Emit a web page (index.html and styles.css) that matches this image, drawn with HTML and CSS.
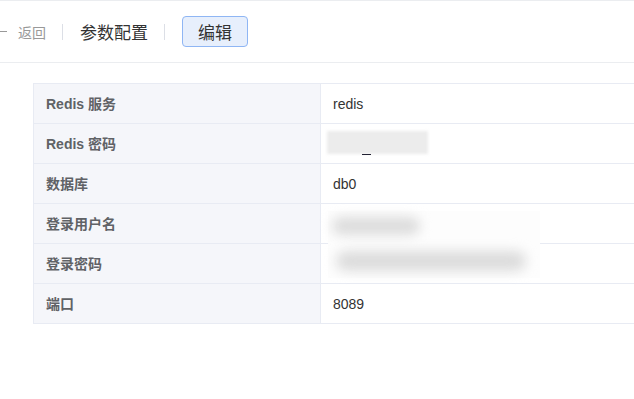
FILE: index.html
```html
<!DOCTYPE html>
<html lang="zh-CN">
<head>
    <meta charset="UTF-8">
    <title>参数配置</title>
    <link rel="stylesheet" href="styles.css">
</head>
<body>
    <!-- 顶部工具栏 -->
    <div class="toolbar">
        <a class="back"><span class="back-line"></span>返回</a>
        <span class="divider"></span>
        <span class="title">参数配置</span>
        <span class="divider"></span>
        <button type="button" class="btn-edit">编辑</button>
    </div>

    <!-- 参数表 -->
    <div class="content">
        <table class="params">
            <tr>
                <th>Redis 服务</th>
                <td>redis</td>
            </tr>
            <tr>
                <th>Redis 密码</th>
                <td><span class="masked masked-pwd"><span class="blur-box"></span><span class="underscore"></span></span></td>
            </tr>
            <tr>
                <th>数据库</th>
                <td>db0</td>
            </tr>
            <tr>
                <th>登录用户名</th>
                <td class="cell-over">
                    <div class="masked-login">
                        <span class="blur-line short"></span>
                        <span class="blur-line long"></span>
                    </div>
                </td>
            </tr>
            <tr>
                <th>登录密码</th>
                <td></td>
            </tr>
            <tr>
                <th>端口</th>
                <td>8089</td>
            </tr>
        </table>
    </div>
</body>
</html>
```

FILE: styles.css
```css
/* 基础 */
body {
    margin: 0;
    font-family: "Liberation Sans", "Noto Sans CJK SC", sans-serif;
    color: #333;
    background: #fff;
    overflow: hidden;
}

/* 工具栏 */
.toolbar {
    display: flex;
    align-items: center;
    height: 61px;
    border-top: 1px solid #ebedf0;
    border-bottom: 1px solid #ebedf0;
}

.back {
    display: flex;
    align-items: center;
    font-size: 14px;
    color: #999;
}

.back-line {
    display: inline-block;
    width: 7px;
    height: 1px;
    background: #999;
    margin-right: 11px;
}

.divider {
    display: inline-block;
    width: 1px;
    height: 16px;
    background: #dcdfe6;
    margin: 0 17px 0 16px;
}

.title {
    font-size: 17px;
    color: #333;
}

.btn-edit {
    width: 66px;
    height: 31px;
    padding: 0;
    font-family: inherit;
    font-size: 17px;
    color: #333;
    background: #e7effc;
    border: 1px solid #8fb6f4;
    border-radius: 4px;
}

/* 参数表 */
.content {
    padding: 20px 0 0 33px;
}

.params {
    border-collapse: collapse;
    width: 603px;
    font-size: 14px;
}

.params th,
.params td {
    height: 39px;
    border: 1px solid #e8ebf3;
    padding: 0 12px;
    text-align: left;
}

.params th {
    width: 262px;
    height: 37px;
    padding-bottom: 2px;
    background: #f5f6fa;
    color: #606266;
    font-size: 14px;
    font-weight: bold;
}

.params td {
    color: #333;
}

/* 打码区域 */
.masked {
    position: relative;
    display: inline-block;
    width: 101px;
    height: 24px;
    margin-left: -6px;
    vertical-align: middle;
    top: -1px;
}

.blur-box {
    display: block;
    width: 101px;
    height: 23px;
    background: #ececec;
    filter: blur(1.5px);
}

.underscore {
    position: absolute;
    left: 35px;
    top: 23px;
    width: 9px;
    height: 1px;
    background: #223;
}

.cell-over {
    position: relative;
}

.masked-login {
    position: absolute;
    left: 7px;
    top: 7px;
    width: 212px;
    height: 67px;
    background: #fdfdfd;
    z-index: 1;
}

.blur-line {
    position: absolute;
    display: block;
    background: #dcdcdc;
    border-radius: 10px;
    filter: blur(6px);
}

.blur-line.short {
    left: 4px;
    top: 6px;
    width: 88px;
    height: 18px;
}

.blur-line.long {
    left: 8px;
    top: 40px;
    width: 190px;
    height: 20px;
}
```
